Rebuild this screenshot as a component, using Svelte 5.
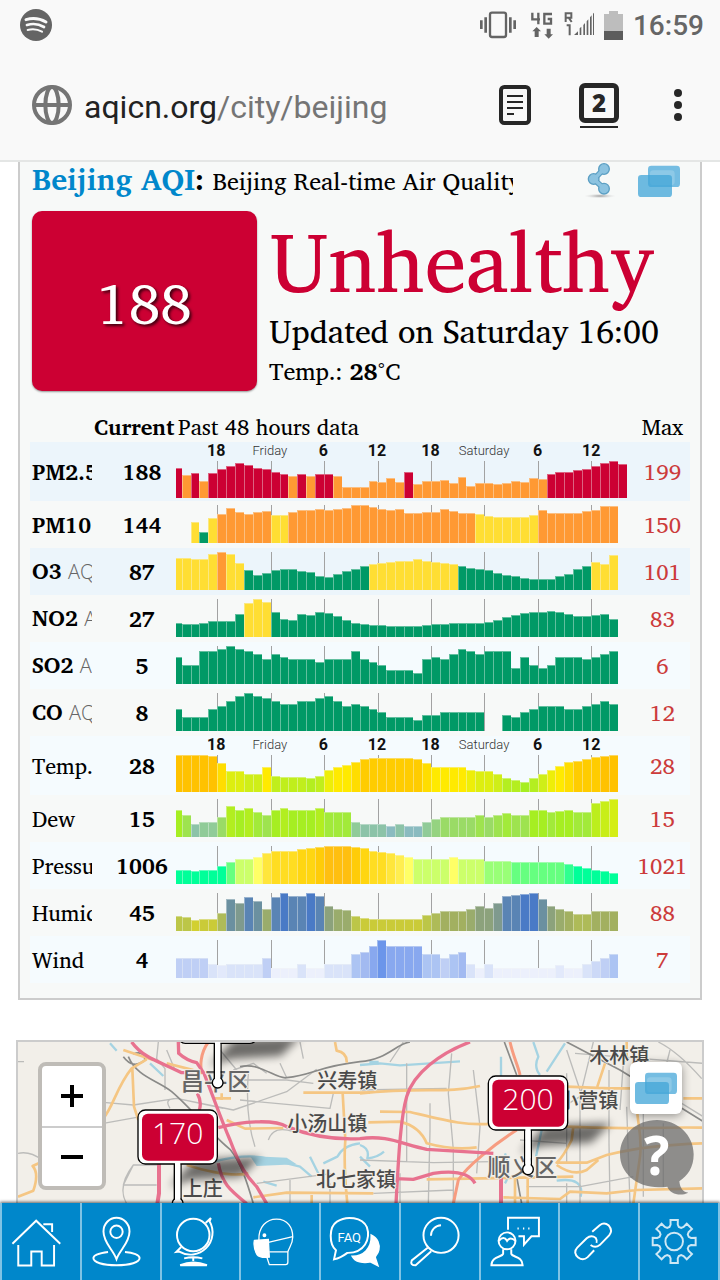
<script lang="ts">
	type Row = {
		name: string;
		note?: string;
		weather?: boolean;
		axis?: boolean;
		tone?: string;
		current: number;
		max: number;
		bars: number[];
		// aqi rows: one level letter and run length per stretch
		levels?: [string, number][];
		// weather rows: colour by bar height
		stops?: [number, string][];
	};

	const BAR = 26.7;
	const FIRST = 17;

	const levelColors: Record<string, string> = {
		g: '#009966',
		y: '#ffde33',
		o: '#ff9933',
		r: '#cc0033'
	};

	const ticks = ['18', 'Friday', '6', '12', '18', 'Saturday', '6', '12'];

	const rows: Row[] = [
		{
			name: 'PM2.5', axis: true, tone: 'strong', current: 188, max: 199,
			bars: [89, 69, 76, 52, 76, 87, 96, 104, 99, 90, 87, 77, 72, 66, 72, 66, 72, 72, 66, 32, 34, 32, 52, 48, 60, 48, 79, 42, 50, 52, 54, 44, 62, 37, 44, 45, 42, 44, 50, 48, 60, 56, 73, 77, 79, 83, 86, 95, 104, 111, 102],
			levels: [['r', 1], ['o', 1], ['r', 1], ['o', 1], ['r', 9], ['o', 1], ['r', 1], ['o', 1], ['r', 2], ['o', 8], ['r', 1], ['o', 15], ['r', 9]]
		},
		{
			name: 'PM10', current: 144, max: 150,
			bars: [0, 0, 62, 32, 75, 86, 104, 92, 88, 94, 95, 84, 85, 93, 99, 98, 101, 99, 103, 105, 113, 114, 107, 103, 99, 101, 91, 91, 92, 93, 102, 97, 90, 89, 86, 82, 79, 79, 77, 79, 84, 98, 91, 91, 89, 91, 95, 100, 111, 110],
			levels: [['y', 3], ['g', 1], ['y', 1], ['o', 6], ['y', 2], ['o', 21], ['y', 7], ['o', 9]]
		},
		{
			name: 'O3', note: 'AQI', tone: 'strong', current: 87, max: 101,
			bars: [97, 97, 94, 94, 107, 114, 108, 81, 61, 44, 52, 61, 63, 62, 58, 53, 41, 38, 49, 58, 64, 72, 78, 81, 85, 86, 88, 93, 88, 83, 80, 77, 71, 66, 62, 60, 52, 46, 43, 36, 33, 33, 34, 42, 49, 62, 72, 84, 79, 104],
			levels: [['y', 5], ['o', 1], ['y', 2], ['g', 14], ['y', 10], ['g', 15], ['y', 3]]
		},
		{
			name: 'NO2', note: 'AQI', current: 27, max: 83,
			bars: [43, 39, 39, 43, 49, 49, 49, 69, 101, 114, 105, 74, 53, 51, 70, 66, 75, 73, 63, 50, 41, 39, 37, 35, 33, 33, 33, 34, 36, 38, 40, 41, 41, 42, 43, 44, 51, 61, 66, 71, 75, 75, 77, 75, 69, 62, 62, 66, 70, 54],
			levels: [['g', 8], ['y', 3], ['g', 39]]
		},
		{
			name: 'SO2', note: 'AQI', tone: 'soft', current: 5, max: 6,
			bars: [82, 57, 57, 98, 98, 106, 114, 106, 98, 90, 74, 90, 82, 74, 74, 74, 66, 74, 74, 74, 98, 74, 66, 57, 41, 41, 41, 33, 74, 82, 74, 90, 106, 98, 90, 98, 98, 98, 49, 82, 57, 49, 57, 82, 82, 82, 74, 82, 90, 98],
			levels: [['g', 50]]
		},
		{
			name: 'CO', note: 'AQI', current: 8, max: 12,
			bars: [66, 41, 41, 41, 66, 74, 90, 106, 114, 106, 98, 90, 82, 82, 90, 90, 98, 106, 90, 74, 82, 74, 66, 57, 41, 41, 41, 33, 49, 49, 57, 57, 57, 57, 57, 0, 0, 49, 41, 57, 66, 74, 74, 74, 66, 66, 74, 82, 90, 82],
			levels: [['g', 50]]
		},
		{
			name: 'Temp.', weather: true, axis: true, tone: 'soft', current: 28, max: 28,
			bars: [111, 111, 111, 111, 107, 86, 63, 63, 54, 54, 74, 49, 45, 45, 45, 41, 49, 67, 76, 80, 90, 98, 103, 103, 103, 103, 103, 98, 86, 76, 76, 76, 76, 67, 63, 63, 54, 41, 36, 31, 41, 54, 67, 79, 89, 94, 99, 104, 108, 111],
			stops: [[31, '#a6ee22'], [41, '#b4ee20'], [49, '#c0ee1c'], [54, '#cfee18'], [63, '#ddee10'], [67, '#eeee08'], [80, '#ffea00'], [90, '#ffdd00'], [104, '#ffcc00'], [114, '#ffc200']]
		},
		{
			name: 'Dew', weather: true, current: 15, max: 15,
			bars: [81, 67, 39, 46, 46, 60, 94, 81, 88, 74, 67, 81, 88, 81, 81, 81, 88, 74, 74, 74, 46, 39, 39, 39, 33, 39, 33, 33, 46, 53, 60, 60, 60, 60, 67, 60, 67, 71, 67, 67, 81, 81, 74, 77, 81, 74, 74, 102, 108, 114],
			stops: [[33, '#8abbc0'], [39, '#8cc3a8'], [46, '#90cb98'], [53, '#95d380'], [60, '#9adb66'], [67, '#9ee34f'], [74, '#a2ea3a'], [81, '#a6ee22'], [94, '#b2ee20'], [102, '#bcee1c'], [108, '#c8ee18'], [114, '#d4ee14']]
		},
		{
			name: 'Pressure', weather: true, tone: 'soft', current: 1006, max: 1021,
			bars: [43, 43, 39, 43, 43, 54, 66, 75, 75, 81, 92, 98, 98, 98, 104, 107, 110, 114, 114, 114, 110, 107, 98, 97, 92, 87, 81, 75, 75, 75, 75, 81, 75, 75, 75, 70, 70, 68, 65, 65, 65, 65, 65, 65, 60, 54, 48, 43, 38, 32],
			stops: [[54, '#00ff99'], [60, '#30ff90'], [66, '#66ff80'], [70, '#99ff77'], [75, '#ccff6a'], [81, '#ffff66'], [87, '#ffee50'], [92, '#ffe63c'], [98, '#ffdd22'], [107, '#ffd611'], [110, '#ffcc08'], [114, '#ffbf10']]
		},
		{
			name: 'Humidity', weather: true, current: 45, max: 88,
			bars: [45, 42, 32, 35, 36, 53, 95, 84, 101, 90, 66, 101, 114, 106, 106, 114, 106, 75, 67, 63, 45, 38, 36, 35, 35, 35, 35, 35, 47, 55, 59, 59, 59, 66, 74, 70, 83, 104, 107, 112, 114, 95, 75, 66, 61, 52, 50, 60, 61, 61],
			stops: [[32, '#d2d030'], [38, '#cacb38'], [47, '#bcc648'], [55, '#aebb58'], [61, '#a2b060'], [67, '#9aac6c'], [75, '#8ca27c'], [84, '#7f9a8e'], [95, '#6b90a0'], [107, '#5a84b4'], [114, '#4a7ac6']]
		},
		{
			name: 'Wind', weather: true, tone: 'soft', current: 4, max: 7,
			bars: [60, 60, 60, 60, 43, 39, 43, 43, 43, 43, 59, 31, 31, 31, 43, 31, 31, 43, 43, 43, 72, 79, 96, 114, 96, 96, 96, 96, 72, 72, 60, 72, 79, 43, 31, 43, 31, 31, 31, 31, 31, 31, 31, 39, 31, 31, 43, 51, 60, 72],
			stops: [[31, '#ecf0fc'], [39, '#e2e9fb'], [43, '#d9e3f9'], [51, '#ccd9f7'], [60, '#bfcff5'], [72, '#acc4f3'], [79, '#a2baf1'], [96, '#88a8ef'], [114, '#6b95ea']]
		}
	];

	function barColor(row: Row, i: number): string {
		if (row.stops) {
			const stop = row.stops.find(([limit]) => row.bars[i] <= limit);
			return stop ? stop[1] : row.stops[row.stops.length - 1][1];
		}
		let end = 0;
		for (const [level, count] of row.levels ?? []) {
			end += count;
			if (i < end) return levelColors[level];
		}
		return levelColors.g;
	}

	const barX = (i: number) => (i === 0 ? 0 : FIRST + (i - 1) * BAR);
	const barW = (i: number) => (i === 0 ? FIRST : BAR);

	// outline of the settings cog
	function gear(cx: number, cy: number): string {
		const points: string[] = [];
		for (let i = 0; i < 8; i++) {
			const a = (i * Math.PI) / 4;
			for (const [r, d] of [[47, -0.31], [53, -0.21], [67, -0.17], [67, 0.17], [53, 0.21], [47, 0.31]]) {
				points.push(`${(cx + r * Math.cos(a + d)).toFixed(1)} ${(cy + r * Math.sin(a + d)).toFixed(1)}`);
			}
		}
		return `M${points.join('L')}Z`;
	}
</script>

{#snippet comments()}
	<svg class="comments" viewBox="0 0 126 96" aria-hidden="true">
		<rect x="30" y="2" width="96" height="64" rx="10" fill="#75bde2" />
		<rect x="36" y="16" width="74" height="44" rx="10" fill="#a5d6ec" opacity="0.5" />
		<rect x="0" y="30" width="102" height="66" rx="10" fill="#42a6d8" opacity="0.76" />
	</svg>
{/snippet}

{#snippet pin(x: number, y: number, value: string)}
	<path class="shadow" d="M{x - 25} {y - 50}L{x + 50} {y - 130}L{x + 250} {y - 140}L{x + 190} {y - 80}L{x + 40} {y - 70}Z" />
	<rect class="board" x={x - 119} y={y - 280} width="238" height="162" rx="22" />
	<rect x={x - 107} y={y - 269} width="216" height="141" rx="18" fill="#cc0033" />
	<circle class="board" cx={x} cy={y} r="16" />
	<path d="M{x - 10} {y - 118}V{y - 12}M{x + 10} {y - 118}V{y - 12}" stroke="#000" stroke-width="4" />
	<rect x={x - 8} y={y - 124} width="16" height="124" fill="#fff" />
	{#if value}
		<text class="aqi" {x} y={y - 177}>{value}</text>
	{/if}
{/snippet}

<div class="page">
	<header class="browser">
		<div class="status">
			<svg width="32" height="32" viewBox="0 0 96 96" aria-label="Spotify">
				<circle cx="48" cy="48" r="48" fill="#646464" />
				<g fill="none" stroke="#f9f9f9" stroke-linecap="round">
					<path d="M18 32Q50 23 78 39" stroke-width="9" />
					<path d="M21 48Q48 40 72 54" stroke-width="8" />
					<path d="M23 63Q46 57 66 68" stroke-width="6" />
				</g>
			</svg>
			<div class="signals">
				<svg width="36" height="28" viewBox="0 0 108 84" aria-label="Vibrate">
					<rect x="30" y="5" width="48" height="73" rx="6" fill="none" stroke="#646464" stroke-width="7" />
					<path d="M4 28V54M17 19V65M91 19V65M104 28V54" stroke="#646464" stroke-width="8" />
				</svg>
				<div class="network">
					<svg width="24" height="27" viewBox="0 0 72 81" aria-label="4G">
						<path d="M7 2V22H30M25 2V37M66 6H43V35H63V21H53" fill="none" stroke="#646464" stroke-width="7" />
						<path d="M20 45L33 58H26V75H14V58H7ZM56 80L69 67H62V50H50V67H43Z" fill="#646464" />
					</svg>
				</div>
				<svg width="30" height="26" viewBox="0 0 90 78" aria-label="Signal">
					<path d="M5 30V4H22V17H6M14 17L23 30M8 40H17V70" fill="none" stroke="#646464" stroke-width="6" />
					<path d="M30 69L42 58V69ZM47 69V49L52 44V69ZM58 69V39L63 33V69ZM68 69V28L73 22V69ZM78 69V16L83 10V69ZM87 69V5L90 2V69Z" fill="#646464" />
				</svg>
				<svg class="battery" width="19" height="29" viewBox="0 0 57 87" aria-label="Battery">
					<path d="M0 9H15V0H42V9H57V60H0Z" fill="#bdbdbd" />
					<path d="M0 60H57V87H0Z" fill="#5c5c5c" />
				</svg>
				<span class="clock">16:59</span>
			</div>
		</div>
		<div class="toolbar">
			<svg width="40" height="40" viewBox="0 0 120 120" fill="none" stroke="#757575" stroke-width="12" aria-hidden="true">
				<circle cx="60" cy="60" r="54" />
				<ellipse cx="60" cy="60" rx="20" ry="54" />
				<path d="M6 60H114" />
			</svg>
			<div class="url">aqicn.org<span>/city/beijing</span></div>
			<button class="tool" aria-label="Reader view">
				<svg width="32" height="40" viewBox="0 0 96 120" fill="none" stroke="#272727">
					<rect x="6" y="6" width="84" height="108" rx="10" stroke-width="12" />
					<path d="M24 33H72M24 51H72M24 69H72M24 87H45" stroke-width="6" />
				</svg>
			</button>
			<button class="tabs" aria-label="2 open tabs"><span>2</span></button>
			<button class="menu" aria-label="Menu">
				<svg width="10" height="32" viewBox="0 0 30 96" fill="#272727">
					<circle cx="15" cy="12" r="12" />
					<circle cx="15" cy="48" r="12" />
					<circle cx="15" cy="84" r="12" />
				</svg>
			</button>
		</div>
	</header>

	<section class="card">
		<div class="heading">
			<h1><a href="#beijing">Beijing AQI</a>:</h1>
			<p>Beijing Real-time Air Quality</p>
			<button aria-label="Share">
				<svg width="32" height="36" viewBox="0 0 96 108">
					<defs>
						<radialGradient id="floor"><stop stop-color="#9a9a9a" /><stop offset="1" stop-color="#ddd" stop-opacity="0" /></radialGradient>
					</defs>
					<ellipse cx="48" cy="99" rx="48" ry="7" fill="url(#floor)" />
					<path d="M59 18L30 49L59 76" fill="none" stroke="#5b9fc3" stroke-width="17" />
					<g fill="#8cc3e0" stroke="#5b9fc3" stroke-width="4">
						<circle cx="60" cy="18" r="16" />
						<circle cx="29" cy="48" r="16" />
						<circle cx="60" cy="77" r="16" />
					</g>
					<path d="M59 18L30 49L59 76" fill="none" stroke="#8cc3e0" stroke-width="10" />
				</svg>
			</button>
			<button aria-label="Comments">{@render comments()}</button>
		</div>

		<div class="summary">
			<div class="score">188</div>
			<div class="details">
				<div class="verdict">Unhealthy</div>
				<div class="updated">Updated on Saturday 16:00</div>
				<div class="temp">Temp.: <b>28</b>°C</div>
			</div>
		</div>

		<table>
			<colgroup>
				<col class="c-name" />
				<col class="c-current" />
				<col />
				<col class="c-max" />
			</colgroup>
			<thead>
				<tr>
					<td></td>
					<th class="h-current">Current</th>
					<th class="h-past">Past 48 hours data</th>
					<th class="max">Max</th>
				</tr>
			</thead>
			<tbody>
				{#each rows as row}
					<tr class={row.tone} class:tall={row.axis}>
						<th class="name" class:plain={row.weather} scope="row">
							{row.name}
							{#if row.note}<small>{row.note}</small>{/if}
						</th>
						<td class="current">{row.current}</td>
						<td class="chart">
							{#if row.axis}
								<div class="axis">
									{#each ticks as tick}
										<span class:day={tick.length > 2}>{tick}</span>
									{/each}
								</div>
							{/if}
							<svg viewBox="0 0 1353 114" preserveAspectRatio="none" shape-rendering="crispEdges" aria-hidden="true">
								{#each ticks as _, i}
									<rect x={124 + i * 6 * BAR} y={row.axis ? 3 : 0} width="3" height="114" fill="#a2a2a2" />
								{/each}
								{#each row.bars as h, i}
									{#if h > 0}
										<rect x={barX(i)} y={114 - h} width={barW(i)} height={h} fill="#f4f7f6" />
										<rect x={barX(i)} y={114 - h} width={barW(i)} height={h} fill={barColor(row, i)} opacity="0.6" />
										<rect x={barX(i) + (i ? 3 : 0)} y={117 - h} width={barW(i) - (i ? 3 : 0)} height={h - 3} fill={barColor(row, i)} />
									{/if}
								{/each}
							</svg>
						</td>
						<td class="max">{row.max}</td>
					</tr>
				{/each}
			</tbody>
		</table>
	</section>

	<section class="map">
		<svg class="tiles" viewBox="54 36 2052 483" preserveAspectRatio="xMidYMin slice" fill="none" stroke-linejoin="round">
			<defs>
				<filter id="blur" x="-30%" y="-50%" width="160%" height="200%"><feGaussianBlur stdDeviation="12" /></filter>
			</defs>
			<g stroke="#a5d3e2" stroke-width="7">
				<path d="M640 395Q740 370 800 385T900 410L935 440M330 40l20 22M450 100l40 38M1080 340Q1030 345 1012 380L970 400M790 455l40 12M930 380l30 60" />
				<path d="M1600 36l15 44q-15 30 5 55M1695 40L1640 125M1503 80V190M1080 345q30 10 22 40q30-2 50-20M1080 105L1140 100L1200 106L1380 94M1625 300L1608 380M1670 452Q1755 440 1742 500M1515 370q20 60 0 90M1080 380l30 30" />
			</g>
			<path d="M1108 92h28v12h-28zM750 378l110 5l30 20l-120 5z" fill="#a5d3e2" />
			<g stroke="#bcbcba" stroke-width="4">
				<path d="M310 217L400 225L530 205L700 240L860 185L950 118M310 280L410 262L540 262M54 370Q90 362 126 390M380 521Q350 470 400 405L480 405M745 130Q735 260 765 350M805 330Q820 285 880 305M510 235q-20-30 20-30l140 30M54 95h18M475 36l-5 50l25 30V180M500 60l25 60M700 120L760 100L800 130M730 150L860 150L940 160M770 460L1000 430M870 450V521M990 460V521M400 405l-30 60h100M720 210L990 235L1000 190M840 100L860 143M660 60l50 60M900 36l10 50" />
				<path d="M1220 100V395M1355 70L1345 190L1360 360V521M1290 220V300L1285 521M1210 36l-40 60M1080 180L1340 175M1700 60L1740 180V521M1827 120V340L1830 521M1880 230L1890 521M1930 200V500M1990 280V470M1420 120L1440 290L1430 430M1080 390L1300 398L1480 395M1120 490L1360 480M1200 430V521M1590 135L1580 190M1725 70L2110 100M1780 36L1740 200L1690 230M2010 60L1980 180L2110 260M1700 130V400M1870 100L1860 240M1580 470L1740 470L1900 440M1700 460V521M1560 330L1700 340M1975 36q60 30 130 110" />
			</g>
			<g stroke="#8a8a88" stroke-width="5">
				<path d="M370 80Q400 120 435 90Q430 60 400 72M385 80C410 140 470 150 515 185C580 240 640 320 690 358C725 400 745 470 760 521M720 110C780 95 830 150 860 143C940 135 950 110 1080 95C1160 90 1190 40 1230 36M1513 36L1550 135M1700 36L1860 120L2110 275M1550 440L1565 521" />
			</g>
			<g stroke="#f5c683" stroke-width="8">
				<path d="M310 265C340 230 350 170 395 115L440 88M397 115L402 230L415 270M370 60l90 30M1005 36L1010 62Q1042 68 1040 98M910 188H1110M1028 190L1036 330Q1030 400 1042 521M680 270L735 296L850 294M560 405C640 430 700 440 745 430M54 500L100 482Q118 430 98 408L126 395M760 502L860 488L1120 490M935 495v26M645 205h48M665 190v20M500 100l80 20" />
				<path d="M1080 190C1280 170 1330 192 1440 168M1700 170L1830 175H1900M1140 245L1230 246C1330 270 1400 290 1480 280L1700 290C1880 300 1980 290 2110 293M1105 277L1200 275Q1260 290 1280 340Q1360 362 1430 352M1720 290L1715 330Q1690 380 1670 398H1760L1820 375Q1940 345 2110 340M1670 405Q1720 440 1760 420L1795 390M1280 448L1720 440M1583 440V521M1510 502L1680 507L1710 485L1820 490L1910 480L2110 475M1915 180C1900 260 1930 300 1920 380L1900 521M1815 100L1792 170M2050 205H2110M1880 36v60M1545 440v80" />
			</g>
			<g stroke="#f79c80" stroke-width="9">
				<path d="M625 36C600 70 600 110 606 132M1530 36C1540 80 1555 110 1560 135M1550 300C1480 345 1400 410 1375 450L1360 521" />
			</g>
			<g stroke="#e8728f" stroke-width="10">
				<path d="M395 36C430 85 480 95 545 128L580 128M535 36L536 70Q560 92 590 98L612 130C640 200 660 260 690 330C720 410 740 440 770 470L800 521M592 190q14 25 6 50M655 293C740 270 830 270 860 290C930 318 1000 330 1080 326C1160 315 1200 340 1280 358L1480 370M655 400C665 460 690 480 740 521M1410 36C1320 70 1240 130 1220 200C1200 270 1195 400 1188 521M1188 446L1240 448L1300 430Q1400 415 1425 460" />
				<path d="M477 400V490L472 521M1503 440V521" stroke-width="12" />
			</g>
			<g class="places">
				<text class="district" x="542" y="180">昌平区</text>
				<text x="952" y="175">兴寿镇</text>
				<text x="862" y="303">小汤山镇</text>
				<text x="948" y="470">北七家镇</text>
				<text x="548" y="498">上庄</text>
				<text x="1768" y="100">木林镇</text>
				<text x="1675" y="233">小营镇</text>
				<text class="district" x="1462" y="438">顺义区</text>
			</g>
			{@render pin(653, 158, '')}
			{@render pin(533, 520, '170')}
			{@render pin(1584, 418, '200')}
		</svg>

		<div class="zoom">
			<button aria-label="Zoom in"><svg width="22" height="22" viewBox="0 0 22 22"><path d="M11 0V22M0 11H22" stroke="#000" stroke-width="4" /></svg></button>
			<button aria-label="Zoom out"><svg width="22" height="22" viewBox="0 0 22 22"><path d="M0 11H22" stroke="#000" stroke-width="4" /></svg></button>
		</div>
		<button class="talk" aria-label="Comments">{@render comments()}</button>
		<button class="help" aria-label="Help">
			<svg viewBox="0 0 222 225">
				<path d="M111 0C172 0 221 44 221 103C221 142 203 168 178 184C180 205 190 217 205 218C180 230 150 222 142 200C60 212 0 165 0 103C0 44 50 0 111 0Z" fill="#6b6b6b" opacity="0.74" />
				<text x="110" y="164">?</text>
			</svg>
		</button>
	</section>

	<nav>
		<a href="#home" aria-label="Home">
			<svg viewBox="3 522 239 228"><path d="M35 643L108 572L182 643M53 647V710H93V667H125V710H163V647M130 583H157V607" /></svg>
		</a>
		<a href="#here" aria-label="Nearest station">
			<svg viewBox="242 522 239 228">
				<path d="M348 690C337 660 308 640 308 605A40 42 0 0 1 388 605C388 640 359 660 348 690ZM322 668C290 672 277 680 277 687C277 700 305 709 348 709C390 709 419 700 419 687C419 678 400 670 374 668" />
				<circle cx="348" cy="606" r="19" />
			</svg>
		</a>
		<a href="#world" aria-label="World">
			<svg viewBox="482 522 239 228">
				<circle cx="578" cy="616" r="50" />
				<path d="M616 579L632 564L628 574A68 68 0 0 1 535 667L526 668L541 653M578 684V696M550 688Q578 681 606 688" />
				<path d="M538 709Q578 692 620 709Z" fill="#fff" />
			</svg>
		</a>
		<a href="#mask" aria-label="Masks">
			<svg viewBox="721 522 239 228" class="thin">
				<path d="M776 632C774 590 800 567 830 567C865 567 880 595 880 622C880 645 868 655 865 668V700Q865 707 858 707H808L801 686M805 639L880 621M808 668H864" />
				<path d="M762 633L805 630L808 684Q780 688 770 676Q758 655 762 633Z" fill="#fff" />
				<circle cx="793" cy="617" r="4" fill="#fff" />
			</svg>
		</a>
		<a href="#faq" aria-label="FAQ">
			<svg viewBox="961 522 239 228">
				<path d="M1001 691L1007 663C986 645 984 592 1010 575C1040 555 1088 562 1102 592C1114 628 1095 672 1042 671C1030 680 1016 688 1001 691Z" />
				<path d="M1116 617C1134 625 1142 645 1138 662C1136 674 1127 679 1127 685L1135 709L1113 698C1090 704 1066 697 1058 682C1090 682 1118 660 1116 617Z" fill="#fff" />
				<text x="1048" y="638">FAQ</text>
			</svg>
		</a>
		<a href="#search" aria-label="Search">
			<svg viewBox="121 522 239 228">
				<circle cx="244" cy="617" r="54" />
				<path d="M213 618A32 32 0 0 1 244 586M203 655L154 694Q148 709 166 709L214 666" />
			</svg>
		</a>
		<a href="#contact" aria-label="Contact">
			<svg viewBox="360 522 239 228">
				<path d="M443 600V563H538V620H515L492 646V620H475M472 596h4M489 596h4M505 596h4" />
				<circle cx="440" cy="634" r="26" />
				<path d="M415 634Q430 617 440 634Q450 619 466 634M428 660V674C425 684 392 682 392 709H488C488 682 456 684 453 674V660" />
			</svg>
		</a>
		<a href="#links" aria-label="Links">
			<svg viewBox="600 522 239 228"><path d="M699 606L722 586Q736 575 750 587Q763 602 751 617L722 647Q708 658 694 647M705 663L685 684Q671 697 656 685Q639 670 653 655L682 626Q696 614 710 625Q715 633 712 640" /></svg>
		</a>
		<a href="#settings" aria-label="Settings">
			<svg viewBox="837 522 239 228" class="faint">
				<path d={gear(942, 636)} />
				<circle cx="942" cy="636" r="27" />
			</svg>
		</a>
	</nav>
</div>

<style>
	:global(body) {
		margin: 0;
		background: #fff;
	}

	.page {
		min-height: 100vh;
		display: flex;
		flex-direction: column;
		font-family: 'Charis SIL', 'Liberation Serif', serif;
		color: #000;
	}

	button {
		padding: 0;
		border: 0;
		background: none;
		display: flex;
		align-items: center;
		justify-content: center;
	}

	.browser {
		background: #f9f9f9;
		border-bottom: 2px solid #e4e6e5;
		font-family: Roboto, sans-serif;
	}

	.status {
		height: 50px;
		padding: 0 16px 0 20px;
		display: flex;
		align-items: center;
		justify-content: space-between;
	}

	.signals {
		display: flex;
		align-items: center;
		gap: 10px;
	}

	.network {
		display: flex;
		margin-left: 4px;
	}

	.clock {
		font-size: 28px;
		font-weight: 500;
		color: #666;
	}

	.toolbar {
		height: 110px;
		padding: 0 37px 0 32px;
		display: flex;
		align-items: center;
	}

	.toolbar > svg {
		flex: none;
	}

	.url {
		flex: 1;
		margin-left: 12px;
		font-size: 32px;
		line-height: 42px;
		padding-top: 4px;
		color: #222;
	}

	.url span {
		color: #757575;
	}

	.tabs {
		flex-direction: column;
		gap: 3px;
		margin: 0 54px 0 48px;
	}

	.tabs span {
		box-sizing: border-box;
		width: 40px;
		height: 40px;
		border: 5px solid #272727;
		border-radius: 6px;
		font: 800 24px/30px 'Open Sans', sans-serif;
		color: #272727;
	}

	.tabs::after {
		content: '';
		width: 38px;
		height: 2px;
		background: #272727;
	}

	.menu {
		width: 10px;
	}

	.card {
		margin: 0 18px 40px;
		padding: 0 10px 15px;
		border: 2px solid #ccc;
		border-top: 0;
		background: #f7f9f8;
	}

	.heading {
		display: flex;
		align-items: center;
		height: 37px;
		padding: 0 10px 0 2px;
	}

	h1 {
		align-self: flex-start;
		margin: 0 8px 0 0;
		font-size: 30px;
		line-height: 34px;
		white-space: nowrap;
	}

	h1 a {
		color: #0087cb;
		text-decoration: none;
	}

	.heading p {
		flex: 0 1 300px;
		margin: 0 auto 0 0;
		font-size: 24px;
		line-height: 36px;
		white-space: nowrap;
		overflow: hidden;
	}

	.heading button {
		margin-left: 22px;
	}

	.comments {
		width: 42px;
		height: 32px;
	}

	.summary {
		display: flex;
		gap: 12px;
		margin: 12px 2px 20px;
	}

	.score {
		flex: 0 0 225px;
		height: 180px;
		border-radius: 10px;
		background: #cc0033;
		box-shadow: 0 1px 2px rgba(0, 0, 0, 0.4);
		color: #fff;
		font-size: 56px;
		line-height: 184px;
		text-align: center;
		text-shadow: 2px 2px 3px rgba(0, 0, 0, 0.7);
	}

	.details {
		white-space: nowrap;
	}

	.verdict {
		font-size: 84px;
		line-height: 100px;
		color: #cc0033;
		text-shadow: 0 0 3px #fff;
	}

	.updated {
		font-size: 32px;
		line-height: 40px;
	}

	.temp {
		font-size: 24px;
		line-height: 40px;
	}

	table {
		width: 100%;
		table-layout: fixed;
		border-collapse: collapse;
	}

	.c-name {
		width: 62px;
	}

	.c-current {
		width: 84px;
	}

	.c-max {
		width: 63px;
	}

	th,
	td {
		padding: 0;
		text-align: left;
		font-size: 22px;
		line-height: 24px;
		font-weight: 400;
		white-space: nowrap;
	}

	thead tr {
		height: 31px;
	}

	thead .h-current {
		padding-left: 2px;
		font-weight: 700;
	}

	thead .h-past {
		padding-left: 2px;
	}

	tbody tr {
		height: 47px;
	}

	tbody tr.tall {
		height: 59px;
	}

	.strong {
		background: #ecf5fb;
	}

	.soft {
		background: #f5fbfe;
	}

	.name {
		padding-left: 2px;
		font-weight: 700;
		overflow: hidden;
	}

	.name.plain {
		font-weight: 400;
	}

	.name small {
		font: 300 20px/24px 'Open Sans', sans-serif;
		color: #666;
	}

	.current {
		padding-left: 16px;
		font-weight: 700;
		text-align: center;
	}

	.chart {
		vertical-align: bottom;
	}

	.chart svg {
		display: block;
		width: 100%;
		height: 38px;
		margin-bottom: 5px;
	}

	.tall .chart svg {
		margin-bottom: 3px;
	}

	.axis {
		display: grid;
		grid-template-columns: repeat(8, minmax(0, 1fr));
		margin: 0 2% 0 3%;
		font: 700 16px/18px Roboto, sans-serif;
		color: #111;
	}

	.axis span {
		display: flex;
		justify-content: center;
	}

	.axis .day {
		font-size: 13px;
		font-weight: 300;
		color: #333;
	}

	.max {
		padding-left: 8px;
		text-align: center;
	}

	tbody .max {
		color: #cc3b3b;
	}

	.map {
		position: relative;
		flex: 1;
		min-height: 160px;
		margin: 0 16px;
		border: 2px solid #ccc;
		border-bottom: 0;
		background: #f2efe9;
		overflow: hidden;
	}

	.tiles {
		position: absolute;
		width: 100%;
		height: 100%;
	}

	.places text {
		font: 500 60px 'Noto Sans CJK SC', sans-serif;
		fill: #4a4a4a;
		stroke: #f2efe9;
		stroke-width: 6px;
		paint-order: stroke;
	}

	.places .district {
		font-size: 70px;
		fill: #666;
	}

	.shadow {
		fill: #000;
		opacity: 0.55;
		filter: url(#blur);
	}

	.board {
		fill: #fff;
		stroke: #000;
		stroke-width: 4px;
	}

	.aqi {
		font: 300 90px 'Open Sans', sans-serif;
		fill: #fff;
		text-anchor: middle;
	}

	.zoom {
		position: absolute;
		top: 20px;
		left: 20px;
		border: 4px solid #bfbcb7;
		border-radius: 8px;
		background: #fff;
	}

	.zoom button {
		width: 60px;
		height: 60px;
	}

	.zoom button + button {
		border-top: 2px solid #ccc;
	}

	.talk {
		position: absolute;
		top: 20px;
		right: 20px;
		width: 52px;
		height: 52px;
		border-radius: 6px;
		background: #fff;
		box-shadow: 0 2px 10px rgba(0, 0, 0, 0.4);
	}

	.help {
		position: absolute;
		top: 78px;
		right: 8px;
		width: 74px;
	}

	.help svg {
		width: 100%;
	}

	.help text {
		font: 700 160px 'Open Sans', sans-serif;
		fill: #fff;
		text-anchor: middle;
	}

	nav {
		position: relative;
		display: grid;
		grid-template-columns: repeat(9, 1fr);
		border-right: 2px solid #7fc3e5;
		background: #0087cb;
		box-shadow: 0 -1px 3px rgba(0, 0, 0, 0.6);
	}

	nav a {
		height: 77px;
		border-left: 2px solid #7fc3e5;
	}

	nav svg {
		display: block;
		width: 100%;
		height: 100%;
		overflow: visible;
		fill: none;
		stroke: #fff;
		stroke-width: 6px;
	}

	nav .thin {
		stroke-width: 4px;
	}

	nav .faint {
		stroke: #cfe8f5;
	}

	nav text {
		font: 400 40px Roboto, sans-serif;
		fill: #fff;
		stroke: none;
		text-anchor: middle;
	}
</style>
